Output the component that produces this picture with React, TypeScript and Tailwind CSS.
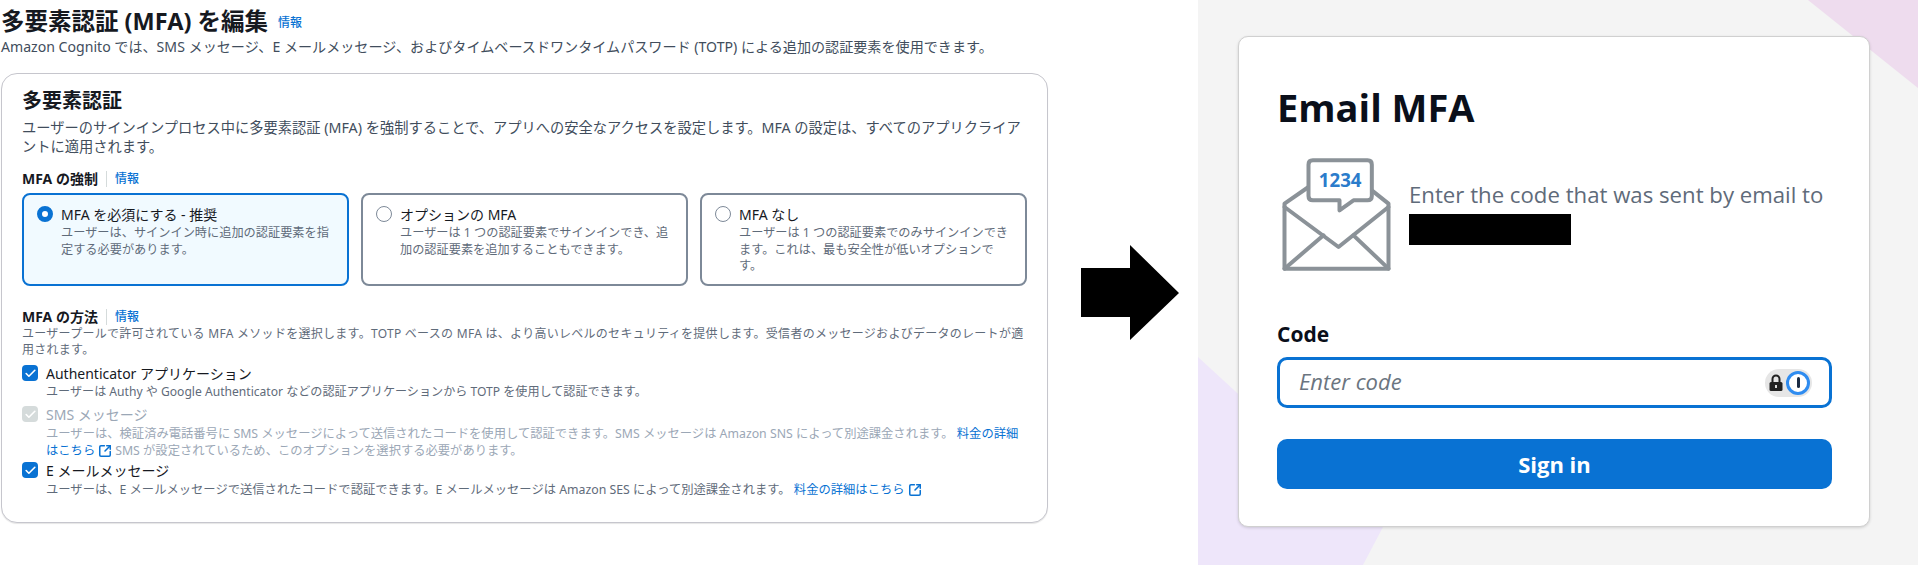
import { Check, SquareArrowOutUpRight } from 'lucide-react';

const jp = "font-['Noto_Sans','Noto_Sans_CJK_JP',sans-serif]";

const modes = [
  {
    label: 'MFA を必須にする - 推奨',
    text: 'ユーザーは、サインイン時に追加の認証要素を指定する必要があります。',
    selected: true,
  },
  {
    label: 'オプションの MFA',
    text: 'ユーザーは 1 つの認証要素でサインインでき、追加の認証要素を追加することもできます。',
    selected: false,
  },
  {
    label: 'MFA なし',
    text: 'ユーザーは 1 つの認証要素でのみサインインできます。これは、最も安全性が低いオプションです。',
    selected: false,
  },
];

function InfoLabel({ label }: { label: string }) {
  return (
    <div className="flex h-[18px] items-center leading-[18px]">
      <span className="text-[14px] font-bold text-[#16191f]">{label}</span>
      <span className="mx-[8px] h-[16px] w-px bg-[#d5dbdb]"></span>
      <span className="text-[12px] font-medium text-[#0972d3]">情報</span>
    </div>
  );
}

function ModeTile({ label, text, selected }: { label: string; text: string; selected: boolean }) {
  return (
    <div
      className={
        selected
          ? 'flex h-[93px] gap-[8px] rounded-lg border-2 border-[#0972d3] bg-[#f1faff] pl-[13px] pr-[16px] pt-[10px]'
          : 'flex h-[93px] gap-[8px] rounded-lg border-2 border-[#7d8998] bg-white pl-[13px] pr-[16px] pt-[10px]'
      }
    >
      <span
        className={
          selected
            ? 'mt-[1px] h-[16px] w-[16px] shrink-0 rounded-full border-[5px] border-[#0972d3] bg-white'
            : 'mt-[1px] h-[16px] w-[16px] shrink-0 rounded-full border-[1.5px] border-[#7d8998] bg-white'
        }
      ></span>
      <div>
        <div className="text-[14px] leading-[20px] text-[#16191f]">{label}</div>
        <div className="text-[12.2px] leading-[16.5px] text-[#5f6b7a]">{text}</div>
      </div>
    </div>
  );
}

function CheckBox({ disabled }: { disabled?: boolean }) {
  return (
    <span
      className={
        disabled
          ? 'flex h-[16px] w-[16px] shrink-0 items-center justify-center rounded-[4px] bg-[#d5dbdb]'
          : 'flex h-[16px] w-[16px] shrink-0 items-center justify-center rounded-[4px] bg-[#0972d3]'
      }
    >
      <Check size={13} strokeWidth={3} className="text-white" />
    </span>
  );
}

function PriceLink({ children }: { children: string }) {
  return <span className="text-[#0972d3]">{children}</span>;
}

function LinkIcon() {
  return <SquareArrowOutUpRight size={14} strokeWidth={2.6} className="mx-[3px] inline-block align-[-3px] text-[#0972d3]" />;
}

function MailIcon() {
  return (
    <svg viewBox="30 15 335 345" width="112" height="115" className="ml-[3px] shrink-0">
      <g fill="none" stroke="#8b9298" strokeWidth="12" strokeLinejoin="round" strokeLinecap="round">
        <path d="M115 105 L43 155 V350 H355 V155 L305 115" />
        <path d="M43 165 L205 285 L355 165" />
        <path d="M43 350 L160 250 M355 350 L250 250" />
        <path
          d="M128 25 H292 Q305 25 305 38 V132 Q305 145 292 145 H250 L208 175 V145 H128 Q115 145 115 132 V38 Q115 25 128 25 Z"
          fill="#fff"
        />
      </g>
      <text x="210" y="104" textAnchor="middle" fontSize="56" fontWeight="700" fill="#2b7ccb" fontFamily="Open Sans, sans-serif">
        1234
      </text>
    </svg>
  );
}

function PasswordBadge() {
  return (
    <div className="flex h-[28px] w-[47px] items-center justify-end rounded-full bg-[#e6e6e6] pr-[2px]">
      <svg viewBox="0 0 16 18" width="16" height="18" className="mr-[2px]">
        <path d="M4.5 8 V5 a3.5 3.5 0 0 1 7 0 V8" fill="none" stroke="#222" strokeWidth="2" />
        <rect x="1.5" y="8" width="13" height="9" rx="1.5" fill="#222" />
        <rect x="7" y="11" width="2" height="3" fill="#ddd" />
      </svg>
      <span className="flex h-[24px] w-[24px] items-center justify-center rounded-full border-[3px] border-[#2f8cf0] bg-white">
        <span className="h-[11px] w-[3px] rounded-full bg-[#1a2b44]"></span>
      </span>
    </div>
  );
}

export default function App() {
  return (
    <div className="flex h-[565px] w-[1918px] overflow-hidden bg-white">
      {/* left: cognito console capture */}
      <div className={`w-[1060px] shrink-0 pl-px pt-[7px] ${jp}`}>
        <div className="flex h-[28px] items-center">
          <h1 className="text-[23.5px] leading-[28px] font-bold text-[#16191f]">多要素認証 (MFA) を編集</h1>
          <span className="ml-[10px] mt-[4px] text-[12px] font-medium text-[#0972d3]">情報</span>
        </div>
        <p className="mt-[2px] text-[14.1px] leading-[20px] text-[#414d5c]">
          Amazon Cognito では、SMS メッセージ、E メールメッセージ、およびタイムベースドワンタイムパスワード (TOTP) による追加の認証要素を使用できます。
        </p>
        <section className="mt-[16px] h-[450px] w-[1047px] rounded-2xl border border-[#c6c6cd] bg-white px-[20px] pt-[14px] shadow-[0_1px_1px_rgba(0,0,0,0.1)]">
          <h2 className="text-[20px] leading-[26px] font-bold text-[#16191f]">多要素認証</h2>
          <p className="mt-[4px] w-[1006px] text-[14.25px] leading-[19px] text-[#414d5c]">
            ユーザーのサインインプロセス中に多要素認証 (MFA) を強制することで、アプリへの安全なアクセスを設定します。MFA の設定は、すべてのアプリクライアントに適用されます。
          </p>
          <div className="mt-[14px]">
            <InfoLabel label="MFA の強制" />
          </div>
          <div className="mt-[5px] grid w-[1005px] grid-cols-3 gap-[12px]">
            {modes.map((m) => (
              <ModeTile key={m.label} {...m} />
            ))}
          </div>
          <div className="mt-[22px]">
            <InfoLabel label="MFA の方法" />
          </div>
          <p className="w-[1003px] text-[12px] leading-[16px] tracking-[0.28px] text-[#5f6b7a]">
            ユーザープールで許可されている MFA メソッドを選択します。TOTP ベースの MFA は、より高いレベルのセキュリティを提供します。受信者のメッセージおよびデータのレートが適用されます。
          </p>
          <div className="mt-[6px] flex h-[18px] items-center gap-[8px] text-[14px] text-[#16191f]">
            <CheckBox />
            Authenticator アプリケーション
          </div>
          <p className="ml-[24px] pt-px text-[12.1px] leading-[18px] text-[#5f6b7a]">
            ユーザーは Authy や Google Authenticator などの認証アプリケーションから TOTP を使用して認証できます。
          </p>
          <div className="mt-[4px] flex h-[18px] items-center gap-[8px] text-[14px] text-[#9ba7b6]">
            <CheckBox disabled />
            SMS メッセージ
          </div>
          <p className="ml-[24px] mt-[2px] w-[973px] text-[12.3px] leading-[17px] text-[#9ba7b6]">
            ユーザーは、検証済み電話番号に SMS メッセージによって送信されたコードを使用して認証できます。SMS メッセージは Amazon SNS によって別途課金されます。{' '}
            <PriceLink>料金の詳細はこちら</PriceLink>
            <LinkIcon />
            SMS が設定されているため、このオプションを選択する必要があります。
          </p>
          <div className="mt-[2px] flex h-[18px] items-center gap-[8px] text-[14px] text-[#16191f]">
            <CheckBox />
            E メールメッセージ
          </div>
          <p className="ml-[24px] pt-[2px] text-[12.3px] leading-[18px] text-[#5f6b7a]">
            ユーザーは、E メールメッセージで送信されたコードで認証できます。E メールメッセージは Amazon SES によって別途課金されます。{' '}
            <PriceLink>料金の詳細はこちら</PriceLink>
            <LinkIcon />
          </p>
        </section>
      </div>

      {/* arrow */}
      <div className="w-[138px] shrink-0 pl-[21px] pt-[245px]">
        <svg viewBox="0 0 98 95" width="98" height="95">
          <path d="M0 23 H49 V0 L98 48 L49 95 V72 H0 Z" fill="#000" />
        </svg>
      </div>

      {/* right: sign-in capture */}
      <div className="relative flex-1 bg-[#f4f4f4] pl-[40px] pt-[36px] font-['Open_Sans',sans-serif]">
        <svg className="absolute inset-0 h-full w-full" viewBox="0 0 720 565" preserveAspectRatio="none">
          <polygon points="610,0 720,0 720,88" fill="#eedcee" />
          <polygon points="0,357 185,527 165,565 0,565" fill="#eee6fa" />
        </svg>
        <div className="relative h-[491px] w-[632px] rounded-[10px] border border-[#d0d0d0] bg-white pl-[38px] pr-[37px] pt-[45px] shadow-[0_1px_3px_rgba(0,0,0,0.15)]">
          <h1 className="text-[38px] leading-[50px] font-bold text-[#0a0f1a]">Email MFA</h1>
          <div className="mt-[25px] flex items-center gap-[17px]">
            <MailIcon />
            <div className="pb-[4px]">
              <p className="text-[22.2px] leading-[27px] text-[#5f6b7a]">Enter the code that was sent by email to</p>
              <div className="mt-[6px] h-[31px] w-[162px] bg-black"></div>
            </div>
          </div>
          <label className="mt-[48px] block text-[21px] leading-[28px] font-bold text-[#0a0f1a]">Code</label>
          <div className="mt-[9px] flex h-[51px] items-center justify-between rounded-[10px] border-[3px] border-[#0972d3] pl-[19px] pr-[17px]">
            <span className="pb-[3px] text-[22px] italic text-[#6b7580]">Enter code</span>
            <PasswordBadge />
          </div>
          <button className="mt-[31px] h-[50px] w-full rounded-[10px] bg-[#0972d3] text-[22px] font-bold text-white">
            Sign in
          </button>
        </div>
      </div>
    </div>
  );
}
